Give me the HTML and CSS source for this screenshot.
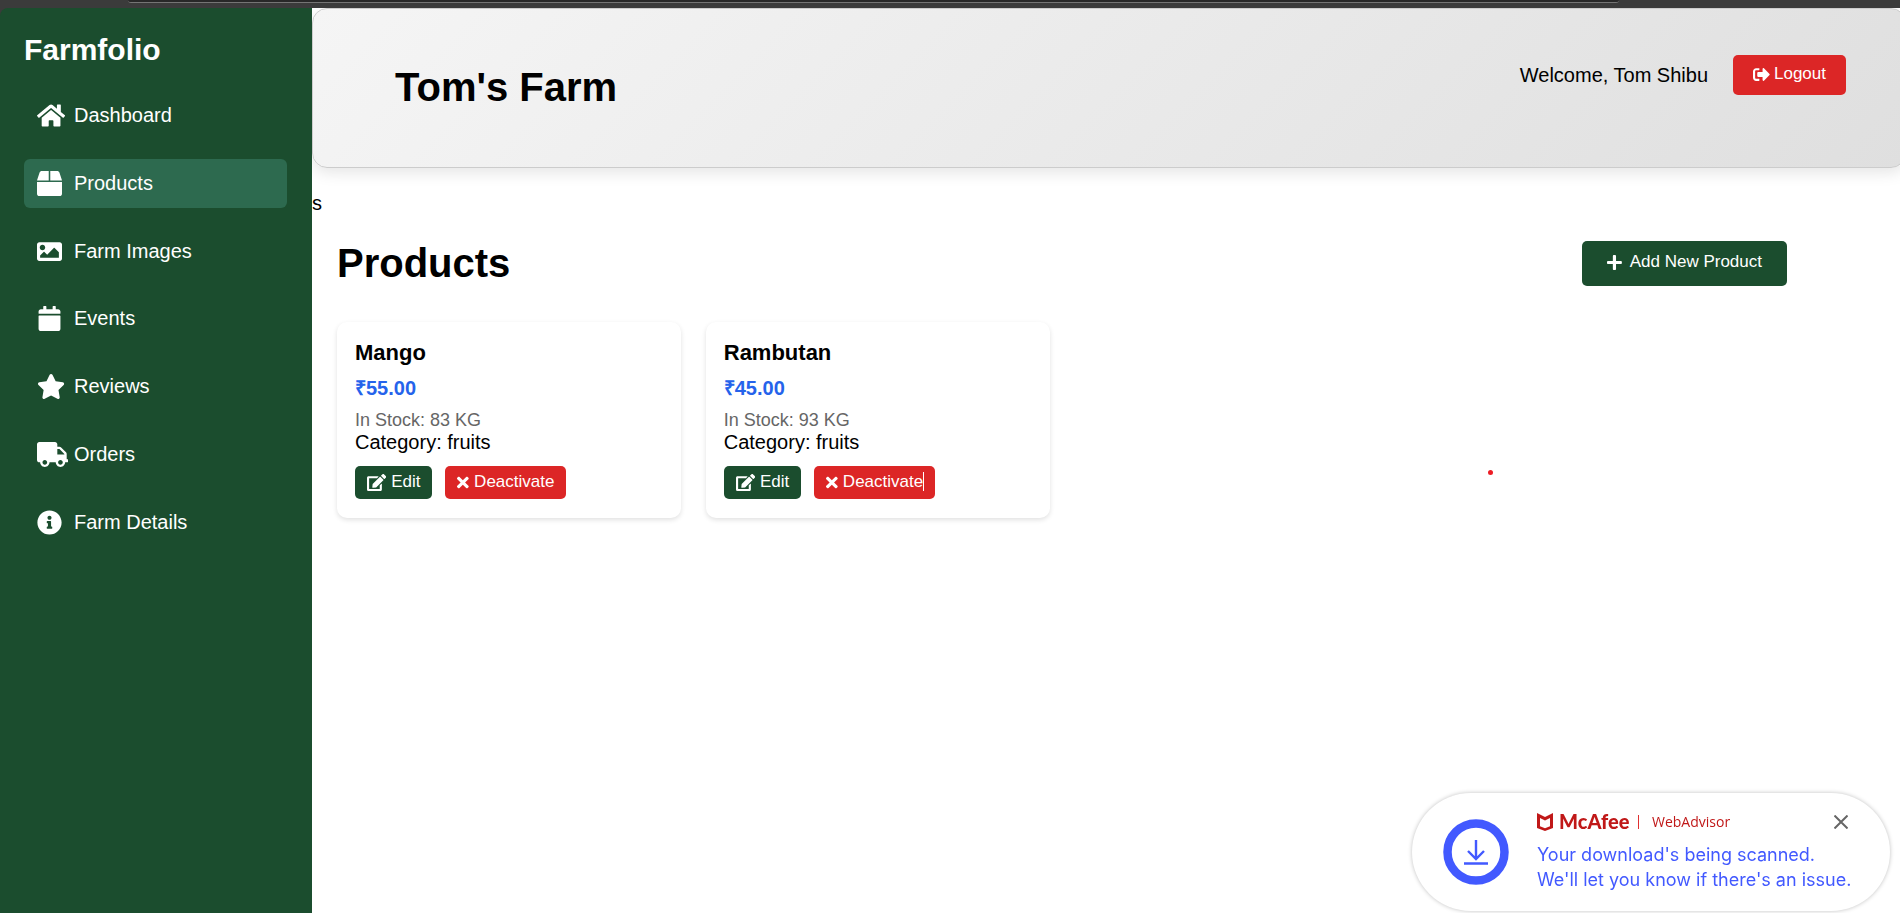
FILE: index.html
```html
<!DOCTYPE html>
<html lang="en">
<head>
<meta charset="utf-8">
<title>Farmfolio - Products</title>
<link rel="stylesheet" href="styles.css">
</head>
<body>
<div class="browser-edge"><div class="address-bar"></div></div>
<div class="app">
  <aside class="sidebar">
    <h2 class="brand">Farmfolio</h2>
    <nav class="menu">
      <a class="menu-link" href="#"><span class="menu-icon"><svg class="icon" viewBox="0 0 576 512"><path d="M280.37 148.26L96 300.11V464a16 16 0 0 0 16 16l112.06-.29a16 16 0 0 0 15.92-16V368a16 16 0 0 1 16-16h64a16 16 0 0 1 16 16v95.64a16 16 0 0 0 16 16.05L464 480a16 16 0 0 0 16-16V300L295.67 148.26a12.19 12.19 0 0 0-15.3 0zM571.6 251.47L488 182.56V44.05a12 12 0 0 0-12-12h-56a12 12 0 0 0-12 12v72.61L318.47 43a48 48 0 0 0-61 0L4.34 251.47a12 12 0 0 0-1.6 16.9l25.5 31A12 12 0 0 0 45.15 301l235.22-193.74a12.19 12.19 0 0 1 15.3 0L530.9 301a12 12 0 0 0 16.9-1.6l25.5-31a12 12 0 0 0-1.7-16.93z"/></svg></span>Dashboard</a>
      <a class="menu-link active" href="#"><span class="menu-icon"><svg class="icon" viewBox="0 0 512 512"><path d="M509.5 184.6L458.9 32.8C452.4 13.2 434.1 0 413.4 0H272v192h238.7c-.4-2.5-.4-5-1.2-7.4zM240 0H98.6c-20.7 0-39 13.2-45.5 32.8L2.5 184.6c-.8 2.4-.8 4.9-1.2 7.4H240V0zM0 224v240c0 26.5 21.5 48 48 48h416c26.5 0 48-21.5 48-48V224H0z"/></svg></span>Products</a>
      <a class="menu-link" href="#"><span class="menu-icon"><svg class="icon" viewBox="0 0 512 512"><path d="M464 448H48c-26.51 0-48-21.49-48-48V112c0-26.51 21.49-48 48-48h416c26.51 0 48 21.49 48 48v288c0 26.51-21.49 48-48 48zM112 120c-30.928 0-56 25.072-56 56s25.072 56 56 56 56-25.072 56-56-25.072-56-56-56zM64 384h384V272l-87.515-87.515c-4.686-4.686-12.284-4.686-16.971 0L208 320l-55.515-55.515c-4.686-4.686-12.284-4.686-16.971 0L64 336v48z"/></svg></span>Farm Images</a>
      <a class="menu-link" href="#"><span class="menu-icon"><svg class="icon" viewBox="-32 0 512 512"><path d="M12 192h424c6.6 0 12 5.4 12 12v260c0 26.5-21.5 48-48 48H48c-26.5 0-48-21.5-48-48V204c0-6.6 5.4-12 12-12zm436-44v-36c0-26.5-21.5-48-48-48h-48V12c0-6.6-5.4-12-12-12h-40c-6.6 0-12 5.4-12 12v52H160V12c0-6.6-5.4-12-12-12h-40c-6.6 0-12 5.4-12 12v52H48C21.5 64 0 85.5 0 112v36c0 6.6 5.4 12 12 12h424c6.6 0 12-5.4 12-12z"/></svg></span>Events</a>
      <a class="menu-link" href="#"><span class="menu-icon"><svg class="icon" viewBox="0 0 576 512"><path d="M259.3 17.8L194 150.2 47.9 171.5c-26.2 3.8-36.7 36.1-17.7 54.6l105.7 103-25 145.5c-4.5 26.3 23.2 46 46.4 33.7L288 439.6l130.7 68.7c23.2 12.2 50.9-7.4 46.4-33.7l-25-145.5 105.7-103c19-18.5 8.5-50.8-17.7-54.6L382 150.2 316.7 17.8c-11.7-23.6-45.6-23.9-57.4 0z"/></svg></span>Reviews</a>
      <a class="menu-link" href="#"><span class="menu-icon"><svg class="icon" viewBox="0 0 640 512"><path d="M624 352h-16V243.9c0-12.7-5.1-24.9-14.1-33.9L494 110.1c-9-9-21.2-14.1-33.9-14.1H416V48c0-26.5-21.5-48-48-48H48C21.5 0 0 21.5 0 48v320c0 26.5 21.5 48 48 48h16c0 53 43 96 96 96s96-43 96-96h128c0 53 43 96 96 96s96-43 96-96h48c8.8 0 16-7.2 16-16v-32c0-8.8-7.2-16-16-16zM160 464c-26.5 0-48-21.5-48-48s21.5-48 48-48 48 21.5 48 48-21.5 48-48 48zm320 0c-26.5 0-48-21.5-48-48s21.5-48 48-48 48 21.5 48 48-21.5 48-48 48zm80-208H416V144h44.1l99.9 99.9V256z"/></svg></span>Orders</a>
      <a class="menu-link" href="#"><span class="menu-icon"><svg class="icon" viewBox="0 0 512 512"><path d="M256 8C119.043 8 8 119.083 8 256c0 136.997 111.043 248 248 248s248-111.003 248-248C504 119.083 392.957 8 256 8zm0 110c23.196 0 42 18.804 42 42s-18.804 42-42 42-42-18.804-42-42 18.804-42 42-42zm56 254c0 6.627-5.373 12-12 12h-88c-6.627 0-12-5.373-12-12v-24c0-6.627 5.373-12 12-12h12v-64h-12c-6.627 0-12-5.373-12-12v-24c0-6.627 5.373-12 12-12h64c6.627 0 12 5.373 12 12v100h12c6.627 0 12 5.373 12 12v24z"/></svg></span>Farm Details</a>
    </nav>
  </aside>

  <main class="main">
    <header class="header">
      <h1 class="farm-name">Tom's Farm</h1>
      <div class="account">
        <span>Welcome, Tom Shibu</span>
        <button class="btn btn-danger btn-logout" type="button"><svg class="icon" viewBox="0 0 512 512"><path d="M497 273L329 441c-15 15-41 4.5-41-17v-96H152c-13.3 0-24-10.7-24-24v-96c0-13.3 10.7-24 24-24h136V88c0-21.4 25.9-32 41-17l168 168c9.3 9.4 9.3 24.6 0 34zM192 436v-40c0-6.6-5.4-12-12-12H96c-17.7 0-32-14.3-32-32V160c0-17.7 14.3-32 32-32h84c6.6 0 12-5.4 12-12V76c0-6.6-5.4-12-12-12H96c-53 0-96 43-96 96v192c0 53 43 96 96 96h84c6.6 0 12-5.4 12-12z"/></svg>Logout</button>
      </div>
    </header>
    <p class="stray">s</p>
    <section class="content">
      <div class="content-head">
        <h1 class="page-title">Products</h1>
        <button class="btn btn-primary btn-add" type="button"><svg class="icon" viewBox="0 0 448 512"><path d="M416 208H272V64c0-17.67-14.33-32-32-32h-32c-17.67 0-32 14.33-32 32v144H32c-17.67 0-32 14.33-32 32v32c0 17.67 14.33 32 32 32h144v144c0 17.67 14.33 32 32 32h32c17.67 0 32-14.33 32-32V304h144c17.67 0 32-14.33 32-32v-32c0-17.67-14.33-32-32-32z"/></svg>Add New Product</button>
      </div>
      <div class="grid">
        <article class="card">
          <h3 class="name">Mango</h3>
          <p class="price">₹55.00</p>
          <p class="stock">In Stock: 83 KG</p>
          <p class="category">Category: fruits</p>
          <div class="actions">
            <button class="btn btn-primary" type="button"><svg class="icon" viewBox="0 0 576 512"><path d="M402.6 83.2l90.2 90.2c3.8 3.8 3.8 10 0 13.8L274.4 405.6l-92.8 10.3c-12.4 1.4-22.9-9.1-21.5-21.5l10.3-92.8L388.8 83.2c3.8-3.8 10-3.8 13.8 0zm162-22.9l-48.8-48.8c-15.2-15.2-39.9-15.2-55.2 0l-35.4 35.4c-3.8 3.8-3.8 10 0 13.8l90.2 90.2c3.8 3.8 10 3.8 13.8 0l35.4-35.4c15.2-15.3 15.2-40 0-55.2zM384 346.2V448H64V128h229.8c3.2 0 6.2-1.3 8.5-3.5l40-40c7.6-7.6 2.2-20.5-8.5-20.5H48C21.5 64 0 85.5 0 112v352c0 26.5 21.5 48 48 48h352c26.5 0 48-21.5 48-48V306.2c0-10.7-12.9-16-20.5-8.5l-40 40c-2.2 2.3-3.5 5.3-3.5 8.5z"/></svg>Edit</button>
            <button class="btn btn-danger" type="button"><svg class="icon" viewBox="0 0 352 512"><path d="M242.72 256l100.07-100.07c12.28-12.28 12.28-32.19 0-44.48l-22.24-22.24c-12.28-12.28-32.19-12.28-44.48 0L176 189.28 75.93 89.21c-12.28-12.28-32.19-12.28-44.48 0L9.21 111.45c-12.28 12.28-12.28 32.19 0 44.48L109.28 256 9.21 356.07c-12.28 12.28-12.28 32.19 0 44.48l22.24 22.24c12.28 12.28 32.2 12.28 44.48 0L176 322.72l100.07 100.07c12.28 12.28 32.2 12.28 44.48 0l22.24-22.24c12.28-12.28 12.28-32.19 0-44.48L242.72 256z"/></svg>Deactivate</button>
          </div>
        </article>
        <article class="card">
          <h3 class="name">Rambutan</h3>
          <p class="price">₹45.00</p>
          <p class="stock">In Stock: 93 KG</p>
          <p class="category">Category: fruits</p>
          <div class="actions">
            <button class="btn btn-primary" type="button"><svg class="icon" viewBox="0 0 576 512"><path d="M402.6 83.2l90.2 90.2c3.8 3.8 3.8 10 0 13.8L274.4 405.6l-92.8 10.3c-12.4 1.4-22.9-9.1-21.5-21.5l10.3-92.8L388.8 83.2c3.8-3.8 10-3.8 13.8 0zm162-22.9l-48.8-48.8c-15.2-15.2-39.9-15.2-55.2 0l-35.4 35.4c-3.8 3.8-3.8 10 0 13.8l90.2 90.2c3.8 3.8 10 3.8 13.8 0l35.4-35.4c15.2-15.3 15.2-40 0-55.2zM384 346.2V448H64V128h229.8c3.2 0 6.2-1.3 8.5-3.5l40-40c7.6-7.6 2.2-20.5-8.5-20.5H48C21.5 64 0 85.5 0 112v352c0 26.5 21.5 48 48 48h352c26.5 0 48-21.5 48-48V306.2c0-10.7-12.9-16-20.5-8.5l-40 40c-2.2 2.3-3.5 5.3-3.5 8.5z"/></svg>Edit</button>
            <button class="btn btn-danger" type="button"><svg class="icon" viewBox="0 0 352 512"><path d="M242.72 256l100.07-100.07c12.28-12.28 12.28-32.19 0-44.48l-22.24-22.24c-12.28-12.28-32.19-12.28-44.48 0L176 189.28 75.93 89.21c-12.28-12.28-32.19-12.28-44.48 0L9.21 111.45c-12.28 12.28-12.28 32.19 0 44.48L109.28 256 9.21 356.07c-12.28 12.28-12.28 32.19 0 44.48l22.24 22.24c12.28 12.28 32.2 12.28 44.48 0L176 322.72l100.07 100.07c12.28 12.28 32.2 12.28 44.48 0l22.24-22.24c12.28-12.28 12.28-32.19 0-44.48L242.72 256z"/></svg><span class="with-caret">Deactivate</span></button>
          </div>
        </article>
      </div>
    </section>
  </main>
</div>

<div class="pointer-dot"></div>

<aside class="toast">
  <svg class="toast-badge" viewBox="0 0 66 66"><circle cx="33" cy="33" r="28.5" fill="none" stroke="#4259ff" stroke-width="8.5"/><path d="M33 21v19M25 32l8 8 8-8M21 44.500h24" fill="none" stroke="#4259ff" stroke-width="2.4"/></svg>
  <div class="toast-body">
    <div class="toast-head">
      <svg class="shield" viewBox="0 0 16 18"><path d="M0 0l8 4 8-4v15l-8 3-8-3zM3 5v8.200l5 2 5-2V5L8 7.500z" fill="#c01818" fill-rule="evenodd"/></svg>
      <span class="mcafee">McAfee</span>
      <span class="divider"></span>
      <span class="advisor">WebAdvisor</span>
      <button class="close" type="button" aria-label="Close"><svg viewBox="0 0 14 14"><path d="M0.500 0.500l13 13M13.500 0.500l-13 13" fill="none" stroke="#666" stroke-width="2"/></svg></button>
    </div>
    <p class="toast-text">Your download's being scanned.<br>We'll let you know if there's an issue.</p>
  </div>
</aside>
</body>
</html>
```
FILE: styles.css
```css
* {
  box-sizing: border-box;
  margin: 0;
  padding: 0;
}

body {
  display: flex;
  flex-direction: column;
  min-height: 100vh;
  overflow: hidden;
  background: #fff;
  color: #000;
  font: 20px/23px Arial, "Liberation Sans", sans-serif;
}

.browser-edge {
  height: 8px;
  background: #3b3b3b;
}

.address-bar {
  height: 3px;
  margin: 0 281px 0 128px;
  background: #282828;
  border-bottom: 1px solid #757575;
  border-radius: 0 0 12px 12px;
}

.app {
  display: flex;
  flex: 1;
  background: linear-gradient(#3b3b3b 12px, #fff 12px);
}

.sidebar {
  flex: 0 0 312px;
  padding: 25px 25px 24px 24px;
  background: #1b4d2e;
  border-top-left-radius: 8px;
  color: #fff;
}

.brand {
  margin-bottom: 24px;
  font-size: 30px;
  line-height: 34px;
}

.menu {
  display: flex;
  flex-direction: column;
  justify-content: space-between;
  height: 456px;
}

.menu-link {
  display: flex;
  align-items: center;
  height: 49px;
  padding: 0 13px;
  border-radius: 6px;
  color: #fff;
  text-decoration: none;
}

.menu-link.active {
  background: #2d6a4f;
}

.menu-icon {
  display: flex;
  width: 37px;
}

.icon {
  display: block;
  height: 17px;
  fill: currentColor;
}

.menu-icon .icon {
  height: 25px;
}

.main {
  flex: 1;
  min-width: 0;
  overflow: hidden;
  background: #fff;
}

.header {
  display: flex;
  justify-content: space-between;
  align-items: flex-start;
  margin-right: -6px;
  padding: 46px 59px 57px 82px;
  background: linear-gradient(135deg, #f5f5f5, #dfdfdf);
  border: 1px solid #ccc;
  border-radius: 15px;
  box-shadow: 0 5px 15px rgba(0, 0, 0, 0.1);
}

.farm-name {
  margin-top: 9px;
  font-size: 40px;
  line-height: 46px;
}

.account {
  display: flex;
  align-items: center;
  gap: 25px;
}

.btn {
  display: flex;
  align-items: center;
  gap: 5px;
  height: 33px;
  padding: 0 12px 1px;
  border: 0;
  border-radius: 5px;
  color: #fff;
  font: 17px/20px Arial, "Liberation Sans", sans-serif;
}

.btn-primary {
  background: #1b4d2e;
}

.btn-danger {
  background: #dc2626;
}

.btn-logout {
  gap: 4px;
  height: 40px;
  padding: 0 20px 2px;
}

.btn-add {
  gap: 8px;
  height: 45px;
  padding: 0 25px 2px;
}

.stray {
  margin-top: 24px;
}

.content {
  padding: 25px 113px 25px 25px;
}

.content-head {
  display: flex;
  justify-content: space-between;
  align-items: center;
  margin-bottom: 36px;
}

.page-title {
  font-size: 40px;
  line-height: 46px;
}

.grid {
  display: grid;
  grid-template-columns: repeat(auto-fill, minmax(300px, 1fr));
  gap: 25px;
}

.card {
  padding: 18px 18px 19px;
  border-radius: 10px;
  box-shadow: 0 2px 5px rgba(0, 0, 0, 0.12);
}

.name {
  font-size: 22px;
  line-height: 26px;
}

.price {
  margin: 11px 0 10px;
  color: #2563eb;
  font-weight: bold;
}

.stock {
  color: #666;
  font-size: 18px;
  line-height: 21px;
}

.actions {
  display: flex;
  gap: 13px;
  margin-top: 12px;
}

.with-caret {
  position: relative;
}

.with-caret::after {
  content: "";
  position: absolute;
  top: 0;
  right: -1px;
  width: 1px;
  height: 19px;
  background: #fff;
}

.pointer-dot {
  position: fixed;
  top: 470px;
  left: 1488px;
  width: 5px;
  height: 5px;
  border-radius: 50%;
  background: #ed1c24;
}

.toast {
  position: fixed;
  right: 10px;
  bottom: 2px;
  display: flex;
  align-items: center;
  gap: 28px;
  height: 118px;
  padding: 0 42px 0 31px;
  background: #fff;
  border-radius: 59px;
  box-shadow: 0 0 4px rgba(0, 0, 0, 0.25);
}

.toast-badge {
  width: 66px;
  height: 66px;
}

.toast-body {
  width: 311px;
}

.toast-head {
  display: flex;
  align-items: center;
  height: 20px;
  margin-bottom: 10px;
}

.shield {
  width: 16px;
  height: 18px;
  margin-right: 6px;
}

.mcafee {
  align-self: flex-start;
  width: 79px;
  color: #c01818;
  font: 900 20px/18px Lato, sans-serif;
}

.divider {
  width: 1px;
  height: 14px;
  margin-right: 13px;
  background: #e03030;
}

.advisor {
  color: #c01818;
  font: 14px/20px "Open Sans", sans-serif;
}

.close {
  width: 14px;
  height: 14px;
  margin-left: auto;
  background: none;
  border: 0;
}

.close svg {
  display: block;
}

.toast-text {
  color: #4259ff;
  font: 18px/25px Inter, sans-serif;
  white-space: nowrap;
}
```
